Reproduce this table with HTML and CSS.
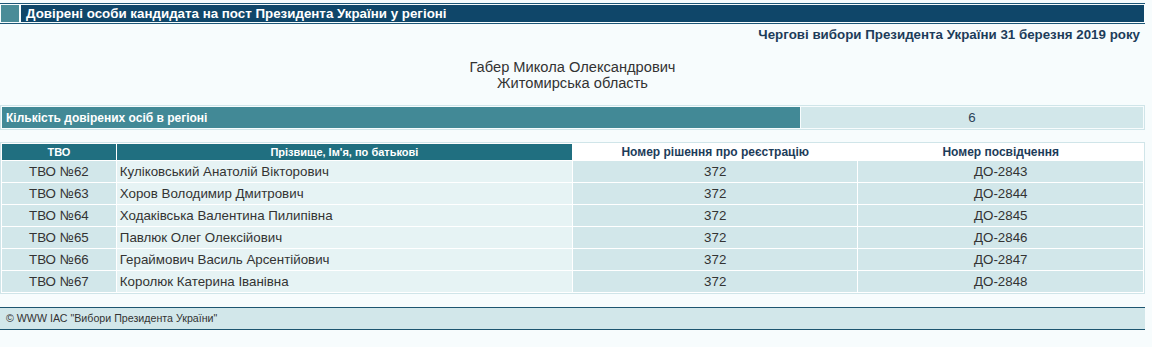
FILE: index.html
```html
<!DOCTYPE html>
<html lang="uk">
<head>
<meta charset="utf-8">
<title>Довірені особи</title>
<link rel="stylesheet" href="styles.css">
</head>
<body>
<div class="page">
  <div class="topbar">
    <div class="topbar-inner">
      <span class="sq"></span>
      <div class="title">Довірені особи кандидата на пост Президента України у регіоні</div>
    </div>
  </div>
  <div class="subtitle">Чергові вибори Президента України 31 березня 2019 року</div>
  <div class="candidate">Габер Микола Олександрович<br>Житомирська область</div>
  <table class="count">
    <tr>
      <td class="count-label">Кількість довірених осіб в регіоні</td>
      <td class="count-value">6</td>
    </tr>
  </table>
  <table class="list">
    <thead>
      <tr>
        <th class="h-dark c1">ТВО</th>
        <th class="h-dark c2">Прізвище, Ім'я, по батькові</th>
        <th class="h-light c3">Номер рішення про реєстрацію</th>
        <th class="h-light c4">Номер посвідчення</th>
      </tr>
    </thead>
    <tbody>
      <tr><td class="tvo">ТВО №62</td><td class="name">Куліковський Анатолій Вікторович</td><td class="num">372</td><td class="num">ДО-2843</td></tr>
      <tr><td class="tvo">ТВО №63</td><td class="name">Хоров Володимир Дмитрович</td><td class="num">372</td><td class="num">ДО-2844</td></tr>
      <tr><td class="tvo">ТВО №64</td><td class="name">Ходаківська Валентина Пилипівна</td><td class="num">372</td><td class="num">ДО-2845</td></tr>
      <tr><td class="tvo">ТВО №65</td><td class="name">Павлюк Олег Олексійович</td><td class="num">372</td><td class="num">ДО-2846</td></tr>
      <tr><td class="tvo">ТВО №66</td><td class="name">Гераймович Василь Арсентійович</td><td class="num">372</td><td class="num">ДО-2847</td></tr>
      <tr><td class="tvo">ТВО №67</td><td class="name">Королюк Катерина Іванівна</td><td class="num">372</td><td class="num">ДО-2848</td></tr>
    </tbody>
  </table>
  <div class="footer">© WWW ІАС "Вибори Президента України"</div>
</div>
</body>
</html>
```
FILE: styles.css
```css
html, body {
  margin: 0;
  padding: 0;
  background: #f7fcfd;
}
body {
  font-family: "Liberation Sans", Arial, sans-serif;
  color: #333;
}
.page {
  width: 1145px;
  padding-top: 3px;
}
.topbar {
  border-top: 1px solid #1b5677;
  border-bottom: 1px solid #1b5677;
  padding: 1px;
}
.topbar-inner {
  display: flex;
  height: 17px;
  gap: 2px;
}
.sq {
  width: 18px;
  background: #4a8c98;
  flex: none;
}
.title {
  flex: 1;
  background: #0f4669;
  color: #fff;
  font-weight: bold;
  font-size: 13.33px;
  line-height: 17px;
  padding-left: 5px;
  white-space: nowrap;
}
.subtitle {
  text-align: right;
  font-weight: bold;
  font-size: 13.33px;
  line-height: 16px;
  color: #1d3c5a;
  padding: 3px 5px 0 0;
}
.candidate {
  text-align: center;
  font-size: 14.67px;
  line-height: 16px;
  color: #333;
  padding-top: 16px;
}
.count {
  width: 1145px;
  border: 1px solid #d0e5e9;
  border-spacing: 1px;
  margin-top: 14px;
}
.count td {
  height: 21px;
  padding: 0;
}
.count-label {
  width: 70%;
  background: #428996;
  color: #fff;
  font-weight: bold;
  font-size: 12px;
  padding-left: 4px !important;
}
.count-value {
  background: #d2e7ea;
  text-align: center;
  font-size: 13.33px;
  color: #2a4257;
}
.list {
  width: 1145px;
  border: 1px solid #d0e5e9;
  border-spacing: 1px;
  margin-top: 12px;
  background: #ffffff;
}
.list th {
  height: 16px;
  padding: 0;
  font-size: 12px;
  font-weight: bold;
}
.h-dark {
  background: #206f80;
  color: #fff;
  font-size: 11px !important;
}
.h-light {
  background: #ffffff;
  color: #1d3c5a;
}
.c1 { width: 10%; }
.c2 { width: 40%; }
.c3 { width: 25%; }
.c4 { width: 25%; }
.list td {
  height: 21px;
  padding: 0;
  font-size: 13.33px;
  color: #333;
}
.tvo {
  background: #d2e7ea;
  text-align: center;
}
.name {
  background: #e6f3f4;
  padding-left: 3px !important;
}
.num {
  background: #d2e7ea;
  text-align: center;
}
.footer {
  margin-top: 13px;
  border-top: 1px solid #1d5570;
  border-bottom: 1px solid #1d5570;
  background: #d2e7ea;
  height: 21px;
  line-height: 21px;
  font-size: 10.67px;
  color: #333;
  padding-left: 6px;
}
```
